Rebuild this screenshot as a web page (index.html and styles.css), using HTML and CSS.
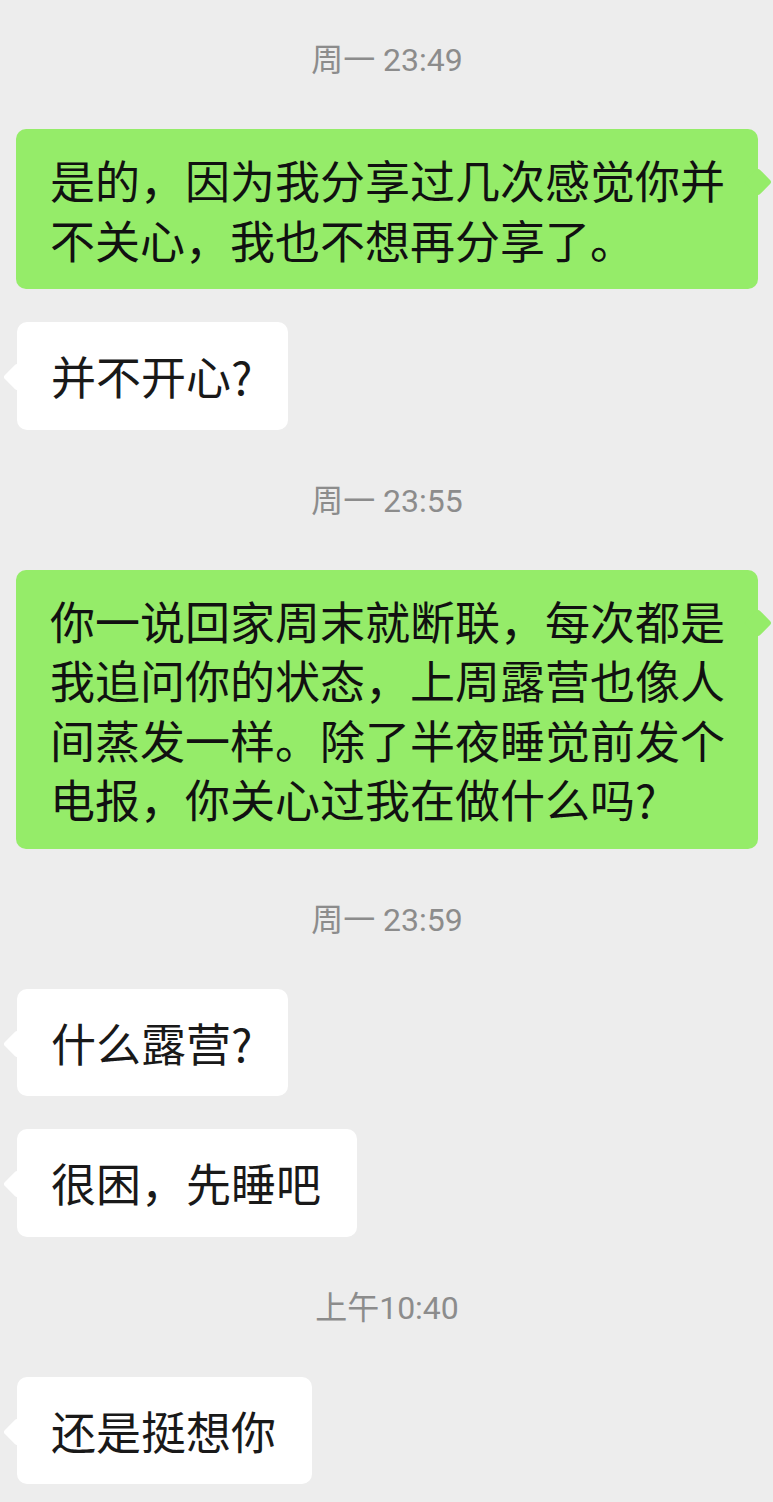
FILE: index.html
```html
<!DOCTYPE html>
<html lang="zh-CN">
<head>
    <meta charset="UTF-8">
    <meta name="viewport" content="width=device-width, initial-scale=1.0">
    <title>聊天</title>
    <link rel="stylesheet" href="styles.css">
</head>
<body>
    <div class="chat">
        <div class="time">周一 23:49</div>
        <div class="msg msg-out">
            <div class="bubble">是的，因为我分享过几次感觉你并不关心，我也不想再分享了。</div>
        </div>
        <div class="msg msg-in">
            <div class="bubble">并不开心?</div>
        </div>

        <div class="time">周一 23:55</div>
        <div class="msg msg-out">
            <div class="bubble">你一说回家周末就断联，每次都是我追问你的状态，上周露营也像人间蒸发一样。除了半夜睡觉前发个电报，你关心过我在做什么吗?</div>
        </div>

        <div class="time">周一 23:59</div>
        <div class="msg msg-in">
            <div class="bubble">什么露营?</div>
        </div>
        <div class="msg msg-in">
            <div class="bubble">很困，先睡吧</div>
        </div>

        <div class="time">上午10:40</div>
        <div class="msg msg-in">
            <div class="bubble">还是挺想你</div>
        </div>
    </div>
</body>
</html>
```

FILE: styles.css
```css
* {
    box-sizing: border-box;
    margin: 0;
    padding: 0;
}

body {
    background-color: #ededed;
    font-family: "Noto Sans CJK SC", "Noto Sans", sans-serif;
    color: #191919;
}

.chat {
    display: flex;
    flex-direction: column;
    gap: 33px;
    padding: 22px 15px 0 16px;
}

.time {
    height: 74px;
    padding-top: 3px;
    line-height: 71px;
    text-align: center;
    font-family: Roboto, "Noto Sans CJK SC", sans-serif;
    font-size: 32px;
    color: #8c8c8c;
}

.msg {
    display: flex;
}

.msg-out {
    justify-content: flex-end;
}

.msg-in {
    justify-content: flex-start;
    padding-left: 1px;
}

.bubble {
    position: relative;
    font-size: 45px;
    line-height: 59.5px;
    border-radius: 10px;
    word-break: break-all;
}

.msg-out .bubble {
    width: 100%;
    background-color: #95ec69;
    padding: 21px 32px 20px 34px;
    color: #111;
}

.msg-in .bubble {
    background-color: #fff;
    padding: 24px 36px 24px 34px;
}

/* little tails */
.bubble::after {
    content: "";
    position: absolute;
    width: 20px;
    height: 20px;
    border-radius: 3px;
    transform: rotate(45deg);
}

.msg-out .bubble::after {
    top: 43px;
    right: -10px;
    background-color: #95ec69;
}

.msg-in .bubble::after {
    top: 45px;
    left: -10px;
    background-color: #fff;
}
```
